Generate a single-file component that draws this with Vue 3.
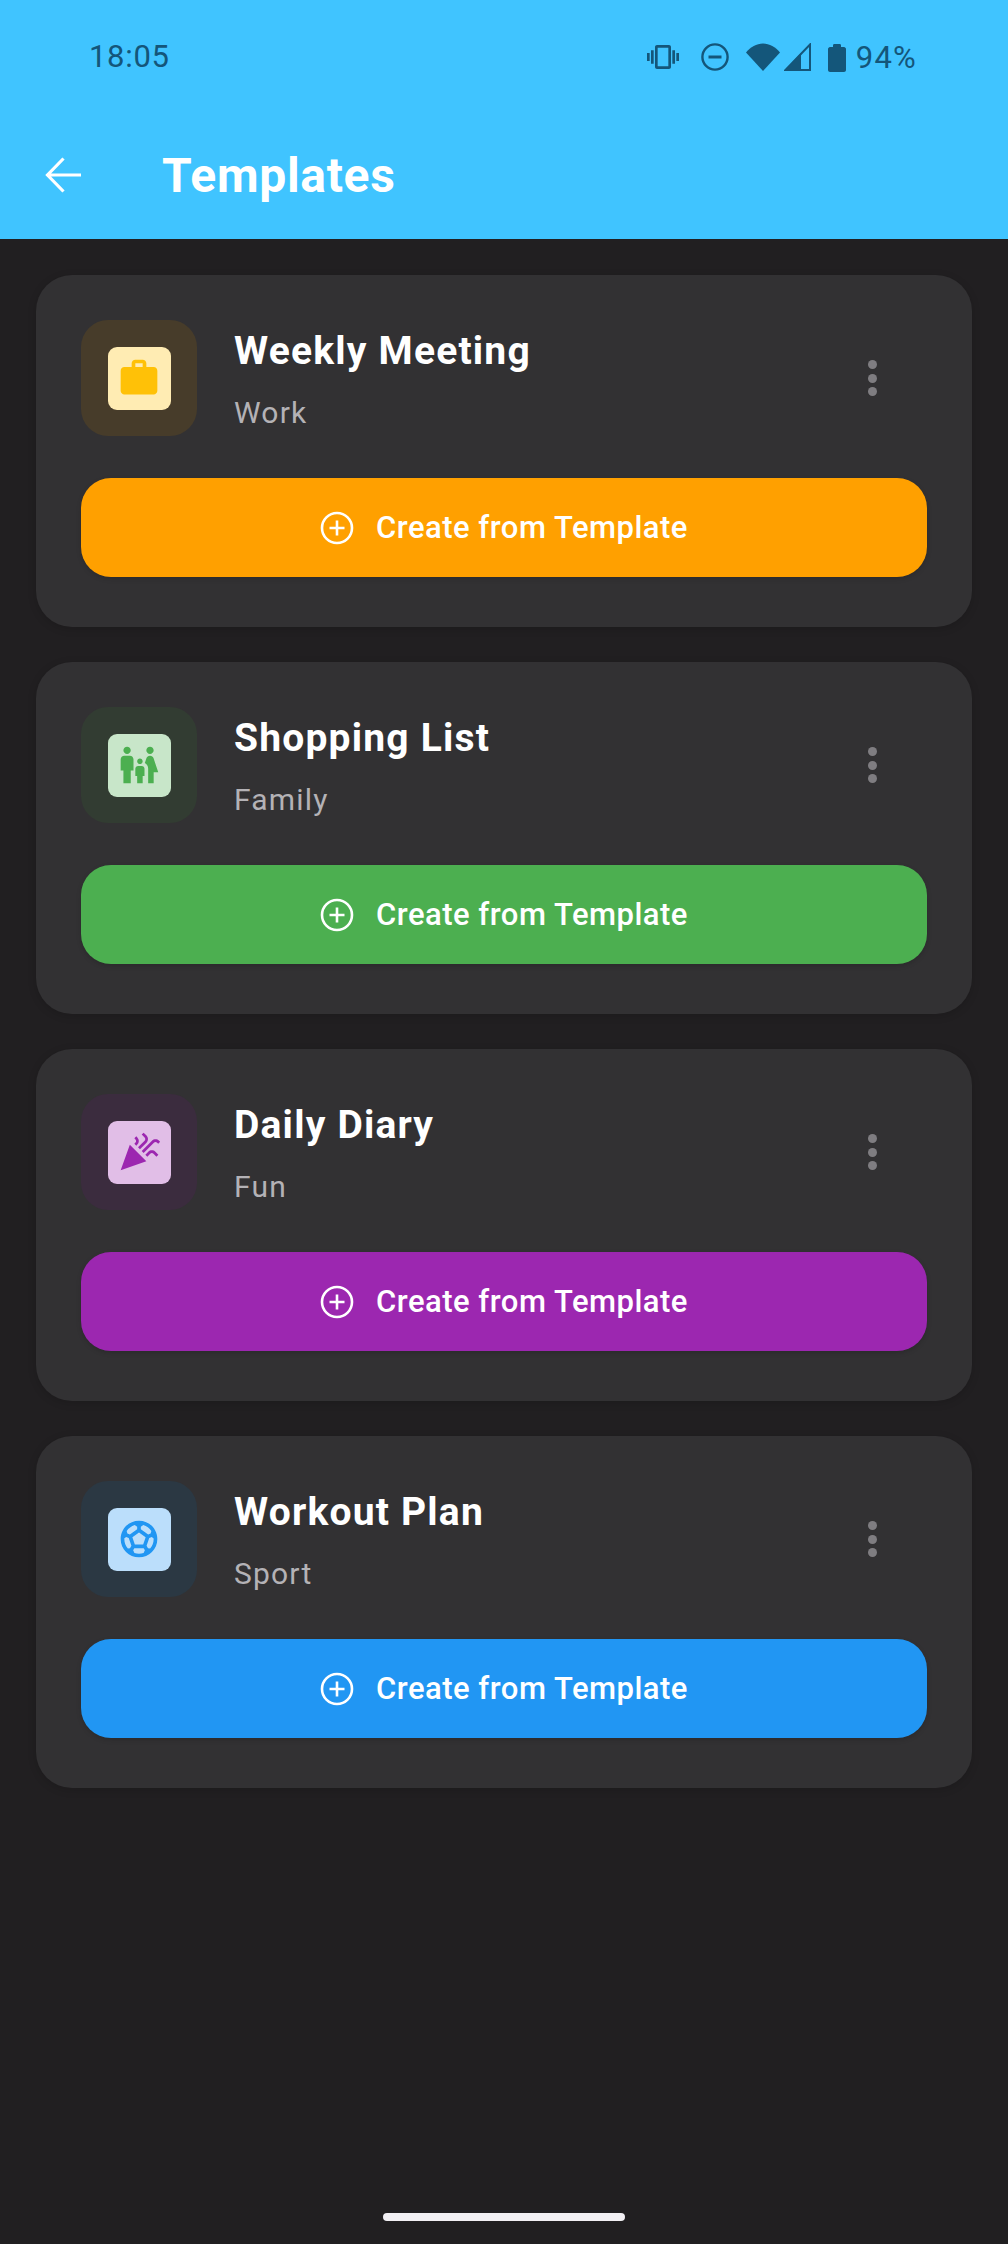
<script setup>
const work = 'M20 6h-4V4c0-1.11-.89-2-2-2h-4c-1.11 0-2 .89-2 2v2H4c-1.11 0-1.99.89-1.99 2L2 19c0 1.11.89 2 2 2h16c1.11 0 2-.89 2-2V8c0-1.11-.89-2-2-2zm-6 0h-4V4h4v2z'
const family = 'M16 4c0-1.11.89-2 2-2s2 .89 2 2-.89 2-2 2-2-.89-2-2zm4 18v-6h2.5l-2.54-7.63C19.68 7.55 18.92 7 18.06 7h-.12c-.86 0-1.63.55-1.9 1.37l-.86 2.58c1.08.6 1.82 1.73 1.82 3.05v8h3zm-7.5-10.5c.83 0 1.5-.67 1.5-1.5s-.67-1.5-1.5-1.5S11 9.17 11 10s.67 1.5 1.5 1.5zM5.5 6c1.11 0 2-.89 2-2s-.89-2-2-2-2 .89-2 2 .89 2 2 2zm2 16v-7H9V9c0-1.1-.9-2-2-2H4c-1.1 0-2 .9-2 2v6h1.5v7h4zm6.5 0v-4h1v-4c0-.82-.68-1.5-1.5-1.5h-2c-.82 0-1.5.68-1.5 1.5v4h1v4h3z'
const party = 'M2 22l14-5-9-9zm12.53-9.47l5.59-5.59c.49-.49 1.28-.49 1.77 0l.59.59 1.06-1.06-.59-.59c-1.07-1.07-2.82-1.07-3.89 0l-5.59 5.59 1.06 1.06zm-4.47-5.65l-.59.59 1.06 1.06.59-.59c1.07-1.07 1.07-2.82 0-3.89l-.59-.59-1.06 1.07.59.59c.48.48.48 1.28 0 1.76zm7 5l-1.59 1.59 1.06 1.06 1.59-1.59c.49-.49 1.28-.49 1.77 0l1.61 1.61 1.06-1.06-1.61-1.61c-1.08-1.07-2.82-1.07-3.89 0zm-2-6l-3.59 3.59 1.06 1.06 3.59-3.59c1.07-1.07 1.07-2.82 0-3.89l-1.59-1.59-1.06 1.06 1.59 1.59c.48.49.48 1.29 0 1.77z'
const soccer = 'M12 2C6.48 2 2 6.48 2 12s4.48 10 10 10 10-4.48 10-10S17.52 2 12 2zm1 3.3l1.35-.95c1.82.56 3.37 1.76 4.38 3.34l-.39 1.34-1.35.46L13 6.7V5.3zm-3.35-.95L11 5.3v1.4L7.01 9.49l-1.35-.46-.39-1.34c1.01-1.57 2.56-2.77 4.38-3.34zM7.08 17.11l-1.14.1C4.73 15.81 4 13.99 4 12c0-.12.01-.23.02-.35l1-.73 1.38.48 1.46 4.34-.78 1.37zm7.42 2.48c-.79.26-1.63.41-2.5.41s-1.71-.15-2.5-.41l-.69-1.49.64-1.1h5.11l.64 1.11-.7 1.48zM14.27 15H9.73l-1.35-4.02L12 8.44l3.63 2.54L14.27 15zm3.79 2.21l-1.14-.1-.79-1.37 1.46-4.34 1.39-.47 1 .73c.01.11.02.22.02.34 0 1.99-.73 3.81-1.94 5.21z'

const templates = [
  { title: 'Weekly Meeting', category: 'Work', icon: work, theme: 'amber' },
  { title: 'Shopping List', category: 'Family', icon: family, theme: 'green' },
  { title: 'Daily Diary', category: 'Fun', icon: party, theme: 'purple' },
  { title: 'Workout Plan', category: 'Sport', icon: soccer, theme: 'blue' }
]
</script>

<template>
  <div class="screen">
    <header class="top">
      <div class="status-bar">
        <span class="clock">18:05</span>
        <div class="status-icons">
          <svg class="st-vibrate" viewBox="0 0 24 24" width="32" height="32" fill="currentColor">
            <path d="M0 15h2V9H0v6zm3 2h2V7H3v10zm19-8v6h2V9h-2zm-3 8h2V7h-2v10zM16.5 3h-9C6.67 3 6 3.67 6 4.5v15c0 .83.67 1.5 1.5 1.5h9c.83 0 1.5-.67 1.5-1.5v-15c0-.83-.67-1.5-1.5-1.5zM16 19H8V5h8v14z" />
          </svg>
          <svg class="st-dnd" viewBox="0 0 28 28" width="28" height="28" fill="none" stroke="currentColor" stroke-width="2.4">
            <circle cx="14" cy="14" r="12.6" />
            <path d="M7.5 14h13" stroke-width="3" />
          </svg>
          <svg class="st-wifi" viewBox="0 0 34 28" width="34" height="28" fill="currentColor">
            <path d="M0 9.5C4.5 4 10.5 0.5 17 0.5S29.500 4 34 9.500L17 28z" />
          </svg>
          <svg class="st-signal" viewBox="0 0 27 28" width="27" height="28">
            <path d="M1.500 27L26 1.500V27z" fill="none" stroke="currentColor" stroke-width="2" />
            <path d="M0 28L17 10v18z" fill="currentColor" />
          </svg>
          <svg class="st-battery" viewBox="0 0 18 29" width="18" height="29" fill="currentColor">
            <path d="M5 2.500C5 1.500 5.500 1 6.500 1h5c1 0 1.500.5 1.500 1.500V4h3c1 0 2 1 2 2v21c0 1-1 2-2 2H2c-1 0-2-1-2-2V6c0-1 1-2 2-2h3z" />
          </svg>
          <span class="percent">94%</span>
        </div>
      </div>
      <div class="app-bar">
        <svg class="back" viewBox="0 0 36 36" width="36" height="36" fill="none" stroke="#fff" stroke-width="3.200">
          <path d="M36 18H3M18.500 1.500L2.500 18l16 16.500" />
        </svg>
        <h1 class="page-title">Templates</h1>
      </div>
    </header>

    <main class="list">
      <section v-for="t in templates" :key="t.title" class="card" :class="t.theme">
        <div class="card-head">
          <div class="icon-box">
            <div class="icon-inner">
              <svg viewBox="0 0 24 24" width="44" height="44" fill="currentColor">
                <path :d="t.icon" />
              </svg>
            </div>
          </div>
          <div class="card-text">
            <h2 class="card-title">{{ t.title }}</h2>
            <p class="card-category">{{ t.category }}</p>
          </div>
          <div class="more">
            <i></i><i></i><i></i>
          </div>
        </div>
        <button class="create">
          <svg viewBox="0 0 34 34" width="34" height="34" fill="none" stroke="#fff" stroke-width="2.600">
            <circle cx="17" cy="17" r="15" />
            <path d="M17 9.500v15M9.500 17h15" />
          </svg>
          <span>Create from Template</span>
        </button>
      </section>
    </main>

    <div class="gesture"></div>
  </div>
</template>

<style scoped>
.screen {
  width: 1008px;
  height: 2244px;
  display: flex;
  flex-direction: column;
  background: #211f21;
  font-family: Roboto, "Noto Sans", sans-serif;
  overflow: hidden;
}

.top {
  height: 239px;
  background: #40c4ff;
  box-sizing: border-box;
}

.status-bar {
  height: 114px;
  display: flex;
  align-items: center;
  justify-content: space-between;
  padding: 0 91px 0 89px;
  color: #14567a;
}

.clock {
  font-size: 31px;
  letter-spacing: 0.7px;
  line-height: 114px;
}

.status-icons {
  display: flex;
  align-items: center;
}

.st-dnd {
  margin-left: 22px;
}

.st-wifi {
  margin-left: 17px;
}

.st-signal {
  margin-left: 4px;
}

.st-battery {
  margin-left: 17px;
}

.percent {
  margin-left: 10px;
  font-size: 31px;
  letter-spacing: 1.2px;
}

.app-bar {
  height: 122px;
  display: flex;
  align-items: center;
  padding-left: 45px;
}

.page-title {
  margin: 0 0 0 81px;
  color: #fff;
  font-size: 48px;
  letter-spacing: 0.7px;
  font-weight: 700;
}

.list {
  padding: 36px 36px 0;
  display: flex;
  flex-direction: column;
  gap: 35px;
}

.card {
  height: 352px;
  box-sizing: border-box;
  padding: 45px 45px 50px;
  border-radius: 36px;
  background: #323133;
  box-shadow: 0 2px 8px rgba(0, 0, 0, 0.15);
  display: flex;
  flex-direction: column;
  justify-content: space-between;
}

.card-head {
  display: flex;
  align-items: center;
}

.icon-box {
  width: 116px;
  height: 116px;
  border-radius: 27px;
  display: flex;
  align-items: center;
  justify-content: center;
}

.icon-inner {
  width: 63px;
  height: 63px;
  border-radius: 9px;
  display: flex;
  align-items: center;
  justify-content: center;
}

.card-text {
  margin-left: 37px;
  padding-top: 3px;
  flex: 1;
}

.card-title {
  margin: 0;
  color: #fff;
  font-size: 39px;
  letter-spacing: 1.2px;
  line-height: 46px;
  font-weight: 700;
}

.card-category {
  margin: 21px 0 0;
  color: #b4b2b6;
  font-size: 30px;
  letter-spacing: 1.2px;
  line-height: 36px;
}

.more {
  width: 9px;
  margin-right: 50px;
  display: flex;
  flex-direction: column;
  gap: 4.500px;
}

.more i {
  width: 9px;
  height: 9px;
  border-radius: 50%;
  background: #7f7d81;
}

.create {
  width: 100%;
  height: 99px;
  border: 0;
  border-radius: 30px;
  display: flex;
  align-items: center;
  justify-content: center;
  gap: 22px;
  color: #fff;
  font-family: inherit;
  font-size: 31px;
  letter-spacing: 0.5px;
  font-weight: 500;
  box-shadow: 0 2px 5px rgba(0, 0, 0, 0.15);
}

.amber .icon-box { background: #473c2a; }
.amber .icon-inner { background: #ffecb3; color: #ffc107; }
.amber .create { background: #ffa000; }

.green .icon-box { background: #323c32; }
.green .icon-inner { background: #c8e6c9; color: #4caf50; }
.green .create { background: #4caf50; }

.purple .icon-box { background: #3b2c3e; }
.purple .icon-inner { background: #e1bee7; color: #9c27b0; }
.purple .create { background: #9c27b0; }

.blue .icon-box { background: #2b3843; }
.blue .icon-inner { background: #bbdefb; color: #2196f3; }
.blue .create { background: #2196f3; }

.gesture {
  width: 242px;
  height: 8px;
  margin: auto auto 23px;
  border-radius: 4px;
  background: #f2f0f4;
}
</style>
